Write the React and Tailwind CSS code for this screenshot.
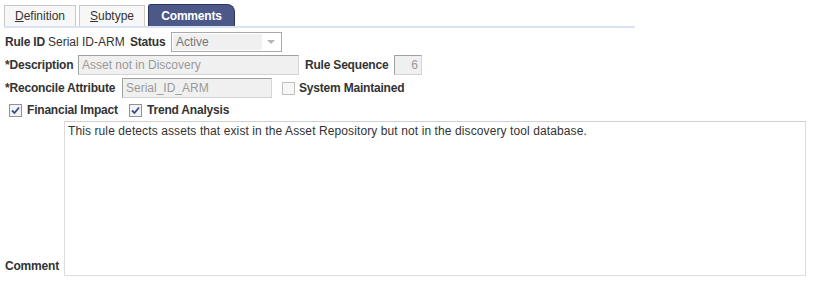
import React from "react";

function Check({ checked }) {
  return (
    <span className="inline-flex h-[13px] w-[13px] shrink-0 items-center justify-center border border-[#8f8f9d] bg-[#f3f3f3]">
      {checked && (
        <svg width="9" height="9" viewBox="0 0 9 9">
          <path d="M1 4.5 L3.5 7 L8 1.5" fill="none" stroke="#3a4a8a" strokeWidth="1.8" />
        </svg>
      )}
    </span>
  );
}

const lbl = "shrink-0 font-bold tracking-[-0.2px] whitespace-nowrap";
const inp =
  "flex h-[20px] shrink-0 items-center border border-[#a0a0a0] border-b-[#d4d4d4] border-r-[#d4d4d4] bg-[#f0f0f0] text-[#9a9a9a] whitespace-nowrap";

export default function App() {
  return (
    <div className="relative h-[288px] w-[814px] bg-white text-[12px] text-[#333] font-['Liberation_Sans',Arial,sans-serif]">
      {/* tabs */}
      <div className="ml-[4px] flex h-[28px] w-[631px] items-end border-b-2 border-[#d9e3f1] pt-[5px]">
        <div className="flex h-[21px] w-[72px] items-center justify-center border border-b-0 border-[#c9c9c9] bg-[#f7f7f7] text-[#333]">
          <span><span className="underline">D</span>efinition</span>
        </div>
        <div className="ml-[3px] flex h-[21px] w-[66px] items-center justify-center border border-b-0 border-[#c9c9c9] bg-[#f7f7f7] text-[#333]">
          <span><span className="underline">S</span>ubtype</span>
        </div>
        <div className="ml-[3px] flex h-[22px] w-[87px] items-center justify-center rounded-tl-[3px] rounded-tr-[8px] border border-b-0 border-[#2c3566] bg-[#4c5888] font-bold tracking-[-0.2px] text-white">
          Comments
        </div>
      </div>

      {/* row 1 */}
      <div className="mt-[4px] flex h-[20px] items-center pl-[5px]">
        <span className={`${lbl} w-[43px]`}>Rule ID</span>
        <span className="w-[82px] shrink-0 whitespace-nowrap">Serial ID-ARM</span>
        <span className={`${lbl} w-[41px]`}>Status</span>
        <div className="flex h-[20px] w-[111px] items-stretch border border-[#a9a9a9] bg-white p-[1px]">
          <div className="flex flex-1 items-center bg-[#f0f0f0] pl-[3px] text-[#777]">Active</div>
          <div className="flex w-[18px] items-center justify-center">
            <svg width="8" height="5" viewBox="0 0 8 5"><path d="M0 0 L8 0 L4 4 Z" fill="#b5b5b5" /></svg>
          </div>
        </div>
      </div>

      {/* row 2 */}
      <div className="mt-[3px] flex h-[20px] items-center pl-[5px]">
        <span className={`${lbl} w-[73px]`}>*Description</span>
        <div className={`${inp} w-[221px] pl-[3px]`}>Asset not in Discovery</div>
        <span className={`${lbl} ml-[6px] w-[89px]`}>Rule Sequence</span>
        <div className={`${inp} w-[28px] justify-end pr-[3px]`}>6</div>
      </div>

      {/* row 3 */}
      <div className="mt-[3px] flex h-[20px] items-center pl-[5px]">
        <span className={`${lbl} w-[117px]`}>*Reconcile Attribute</span>
        <div className={`${inp} w-[150px] pl-[3px]`}>Serial_ID_ARM</div>
        <span className="ml-[10px] inline-flex h-[13px] w-[13px] shrink-0 border border-[#c0c0c0] bg-[#f7f7f7]" />
        <span className={`${lbl} ml-[4px]`}>System Maintained</span>
      </div>

      {/* row 4 */}
      <div className="mt-[3px] flex h-[18px] items-center pl-[9px]">
        <Check checked />
        <span className={`${lbl} ml-[5px] w-[102px]`}>Financial Impact</span>
        <Check checked />
        <span className={`${lbl} ml-[5px]`}>Trend Analysis</span>
      </div>

      {/* comment */}
      <div className="mt-[2px] flex pl-[5px]">
        <div className={`${lbl} flex w-[59px] items-end pb-[1px]`}>Comment</div>
        <div className="h-[155px] w-[742px] border border-[#dcdcdc] border-t-[#d0d0d0] bg-white pl-[3px] pt-0 tracking-[0.1px] text-[#333]">
          This rule detects assets that exist in the Asset Repository but not in the discovery tool database.
        </div>
      </div>
    </div>
  );
}
